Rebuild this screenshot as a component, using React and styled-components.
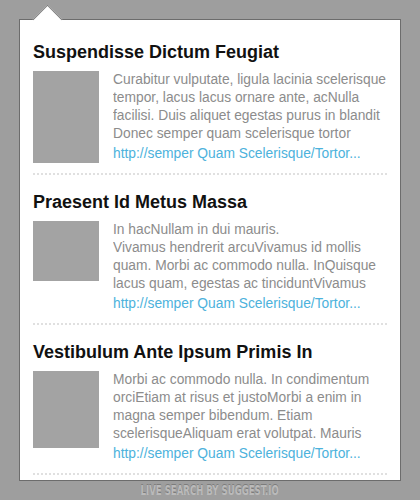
import React from 'react';
import styled, { createGlobalStyle } from 'styled-components';

const results = [
  {
    title: 'Suspendisse Dictum Feugiat',
    thumb: 92,
    text: [
      'Curabitur vulputate, ligula lacinia scelerisque tempor, lacus lacus ornare ante, acNulla facilisi. Duis aliquet egestas purus in blandit Donec semper quam scelerisque tortor',
    ],
  },
  {
    title: 'Praesent Id Metus Massa',
    thumb: 60,
    text: [
      'In hacNullam in dui mauris.',
      'Vivamus hendrerit arcuVivamus id mollis quam. Morbi ac commodo nulla. InQuisque lacus quam, egestas ac tinciduntVivamus',
    ],
  },
  {
    title: 'Vestibulum Ante Ipsum Primis In',
    thumb: 77,
    text: [
      'Morbi ac commodo nulla. In condimentum orciEtiam at risus et justoMorbi a enim in magna semper bibendum. Etiam scelerisqueAliquam erat volutpat. Mauris',
    ],
  },
];

function App() {
  return (
    <>
      <GlobalStyle />
      <Page>
        <Dropdown>
          <Arrow />
          <List>
            {results.map((item) => (
              <React.Fragment key={item.title}>
                <Result>
                  <Title>{item.title}</Title>
                  <Body>
                    <Thumb height={item.thumb} />
                    <Info>
                      <Excerpt>
                        {item.text.map((line, i) => (
                          <React.Fragment key={i}>
                            {i > 0 && <br />}
                            {line}
                          </React.Fragment>
                        ))}
                      </Excerpt>
                      <Link href="#">http://semper Quam Scelerisque/Tortor...</Link>
                    </Info>
                  </Body>
                </Result>
                <Divider />
              </React.Fragment>
            ))}
          </List>
        </Dropdown>
        <Credit>
          <span>Live search by suggest.io</span>
        </Credit>
      </Page>
    </>
  );
}

export default App;

const GlobalStyle = createGlobalStyle`
  html, body {
    margin: 0;
    padding: 0;
    background: #9e9e9e;
  }
  body {
    font-family: 'Liberation Sans', Arial, sans-serif;
  }
`;

const Page = styled.div`
  width: 420px;
  height: 500px;
  padding: 19px 19px 0;
  box-sizing: border-box;
  display: flex;
  flex-direction: column;
`;

const Dropdown = styled.div`
  position: relative;
  width: 382px;
  box-sizing: border-box;
  background: #fff;
  border: 1px solid #6c6c6c;
  padding-bottom: 5px;
`;

const Arrow = styled.div`
  position: absolute;
  left: 17px;
  top: -11px;
  width: 21px;
  height: 21px;
  box-sizing: border-box;
  background: #fff;
  border-top: 1px solid #7a7a7a;
  border-left: 1px solid #7a7a7a;
  transform: rotate(45deg);
`;

const List = styled.div`
  padding-top: 5px;
  display: flex;
  flex-direction: column;
`;

const Result = styled.div`
  padding: 17px 6px 10px 13px;
`;

const Title = styled.h2`
  margin: 0 0 9px;
  font-size: 18px;
  line-height: 20px;
  font-weight: bold;
  color: #111;
`;

const Body = styled.div`
  display: flex;
  align-items: flex-start;
  gap: 14px;
`;

const Thumb = styled.div`
  flex: none;
  width: 66px;
  height: ${(p) => p.height}px;
  background: #a3a3a3;
`;

const Info = styled.div`
  flex: 1;
  min-width: 0;
  display: flex;
  flex-direction: column;
`;

const Excerpt = styled.p`
  margin: 0;
  font-size: 13.8px;
  line-height: 18px;
  color: #8c8c8c;
  max-height: 72px;
  overflow: hidden;
`;

const Link = styled.a`
  margin-top: 2px;
  font-size: 13.8px;
  line-height: 18px;
  color: #4cb2dc;
  text-decoration: none;
`;

const Divider = styled.div`
  height: 2px;
  margin: 0 12px 0 13px;
  background-image: linear-gradient(to right, #e0e0e0 50%, transparent 50%);
  background-size: 4px 2px;
`;

const Credit = styled.div`
  flex: 1;
  display: flex;
  align-items: center;
  justify-content: center;
  padding-bottom: 1px;

  span {
    display: inline-block;
    font-family: 'DejaVu Sans Condensed', 'Liberation Sans', sans-serif;
    font-weight: bold;
    font-size: 14px;
    text-transform: uppercase;
    color: #bababa;
    text-shadow: 0 -1px 0 #7c7c7c;
    white-space: nowrap;
    transform: scaleX(0.68);
  }
`;
